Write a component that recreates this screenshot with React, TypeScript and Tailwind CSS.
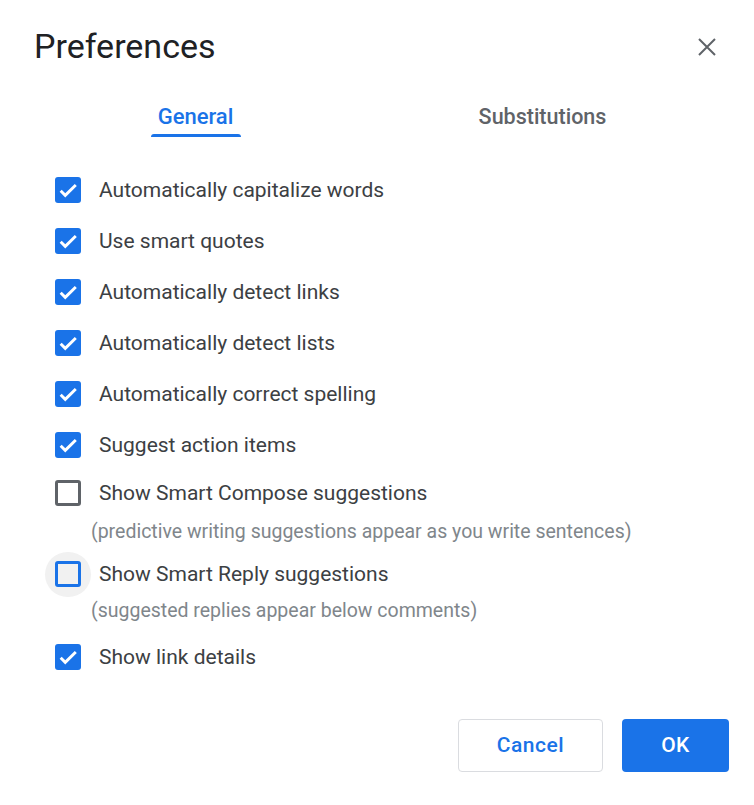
import React from 'react'

type Item = { label: string; checked: boolean; note?: string; focus?: boolean }

const ITEMS: Item[] = [
  { label: 'Automatically capitalize words', checked: true },
  { label: 'Use smart quotes', checked: true },
  { label: 'Automatically detect links', checked: true },
  { label: 'Automatically detect lists', checked: true },
  { label: 'Automatically correct spelling', checked: true },
  { label: 'Suggest action items', checked: true },
  {
    label: 'Show Smart Compose suggestions',
    checked: false,
    note: '(predictive writing suggestions appear as you write sentences)',
  },
  {
    label: 'Show Smart Reply suggestions',
    checked: false,
    focus: true,
    note: '(suggested replies appear below comments)',
  },
  { label: 'Show link details', checked: true },
]

// vertical spacing before each row, tuned to the screenshot
const ROW_MT = ['mt-0', 'mt-[25px]', 'mt-[25px]', 'mt-[25px]', 'mt-[25px]', 'mt-[25px]', 'mt-[22px]', 'mt-[17px]', 'mt-[21px]']
const NOTE_MT = ['', '', '', '', '', '', 'mt-[14px]', 'mt-[12px]', '']

function Box({ checked, focus }: { checked: boolean; focus?: boolean }) {
  if (checked) {
    return (
      <span className="flex h-[26px] w-[26px] shrink-0 items-center justify-center rounded-[3px] bg-[#1a73e8]">
        <svg width="22" height="22" viewBox="0 0 24 24">
          <path d="M4 12.8l5 5L20.5 6.5" fill="none" stroke="#fff" strokeWidth="3.2" />
        </svg>
      </span>
    )
  }
  return (
    <span className="relative flex h-[26px] w-[26px] shrink-0 items-center justify-center">
      {focus && <span className="absolute left-[-10px] top-[-9px] h-[45px] w-[46px] rounded-full bg-[#f1f1f1]" />}
      <span
        className={`relative h-[26px] w-[26px] rounded-[3px] border-[3px] ${
          focus ? 'border-[#1a73e8]' : 'border-[#5f6368]'
        }`}
      />
    </span>
  )
}

export default function App() {
  return (
    <div
      className="h-[805px] w-[754px] bg-white"
      style={{ fontFamily: 'Roboto, "Liberation Sans", sans-serif' }}
    >
      {/* header */}
      <div className="flex items-start justify-between pl-[34px] pr-[38px] pt-[26px]">
        <h1 className="text-[34px] leading-[40px] font-normal text-[#202124]">Preferences</h1>
        <svg className="mt-[12px]" width="18" height="18" viewBox="0 0 18 18">
          <path d="M1 1L17 17M17 1L1 17" stroke="#5f6368" strokeWidth="2" />
        </svg>
      </div>

      {/* tabs */}
      <div className="mt-[38px] flex pl-[22px] pr-[38px]">
        <div className="flex w-1/2 justify-center">
          <div className="flex flex-col items-center">
            <span className="px-[7px] text-[22px] leading-[26px] font-medium text-[#1a73e8]">General</span>
            <span className="mt-[4px] h-[3px] w-[90px] rounded-t-[3px] bg-[#1a73e8]" />
          </div>
        </div>
        <div className="flex w-1/2 justify-center">
          <span className="text-[21.5px] leading-[26px] font-medium text-[#5f6368]">Substitutions</span>
        </div>
      </div>

      {/* options */}
      <div className="mt-[40px] flex flex-col pl-[55px]">
        {ITEMS.map((it, i) => (
          <React.Fragment key={it.label}>
            <div className={`flex h-[26px] items-center gap-[18px] ${ROW_MT[i]}`}>
              <Box checked={it.checked} focus={it.focus} />
              <span className="text-[21px] leading-[24px] text-[#3c4043]">{it.label}</span>
            </div>
            {it.note && (
              <div className={`ml-[36px] text-[19.5px] leading-[24px] text-[#80868b] ${NOTE_MT[i]}`}>{it.note}</div>
            )}
          </React.Fragment>
        ))}
      </div>

      {/* actions */}
      <div className="mt-[49px] flex justify-end gap-[19px] pr-[25px]">
        <button className="h-[53px] w-[145px] rounded-[4px] border border-[#dadce0] bg-white text-[21px] tracking-[0.5px] font-medium text-[#1a73e8]">
          Cancel
        </button>
        <button className="h-[53px] w-[107px] rounded-[4px] bg-[#1a73e8] text-[21px] tracking-[0.5px] font-medium text-white">
          OK
        </button>
      </div>
    </div>
  )
}
